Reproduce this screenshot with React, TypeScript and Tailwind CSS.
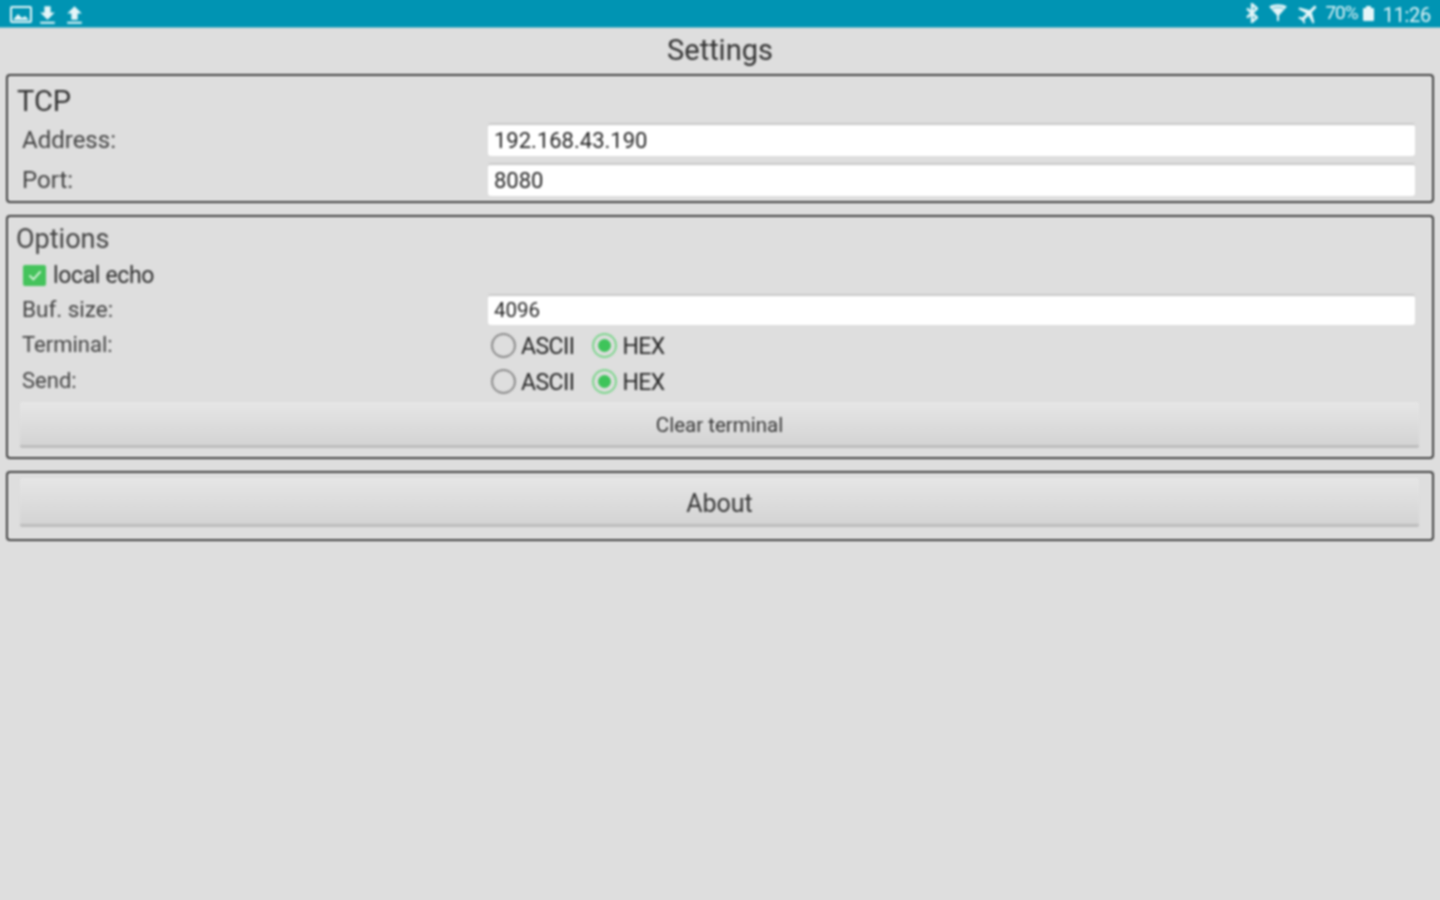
import React from "react";
import { MdFileDownload, MdFileUpload, MdLocalAirport } from "react-icons/md";

const TextField = ({ value, size = "h-[33px]", text = "text-[22px]" }: { value: string; size?: string; text?: string }) => (
  <div className={`${size} ${text} flex-1 bg-white rounded-[3px] border-t-2 border-[#c9c9c9] flex items-center pl-[6px] text-[#262626] leading-none`}>
    {value}
  </div>
);

const Radio = ({ label, checked }: { label: string; checked?: boolean }) => (
  <div className="flex items-center">
    <span
      className={`w-[25px] h-[25px] rounded-full border-2 flex items-center justify-center ${
        checked ? "border-[#7fd68f]" : "border-[#8e8e8e]"
      }`}
    >
      {checked && <span className="w-[13px] h-[13px] rounded-full bg-[#3ec45a]" />}
    </span>
    <span className="ml-[5px] mt-[2px] text-[23px] tracking-[-0.55px] text-[#262626] leading-none">{label}</span>
  </div>
);

const RadioRow = ({ label }: { label: string }) => (
  <div className="h-[36px] flex items-center">
    <div className="w-[466px] text-[22px] text-[#444] leading-none">{label}</div>
    <div className="flex gap-[18px] pl-[3px]">
      <Radio label="ASCII" />
      <Radio label="HEX" checked />
    </div>
  </div>
);

const GrayButton = ({ label, className }: { label: string; className: string }) => (
  <div
    className={`${className} flex items-center justify-center bg-gradient-to-b from-[#e6e6e6] to-[#d4d4d4] border-b-[3px] border-[#bdbdbd] rounded-[2px] text-[#383838] leading-none`}
  >
    {label}
  </div>
);

const Panel = ({ className, children }: { className: string; children: React.ReactNode }) => (
  <section className={`${className} mx-[6px] border-2 border-[#3c3c3c] rounded-[4px] shadow-[inset_0_0_0_1px_#eeeeee]`}>
    {children}
  </section>
);

export default function App() {
  return (
    <div className="w-[1440px] h-[900px] overflow-hidden bg-[#dedede] font-['Roboto',sans-serif]">
      {/* blur layer runs past the window so its edges don't fade */}
      <div className="w-[1448px] h-[908px] -ml-[4px] -mt-[4px] blur-[0.8px]">
        {/* Status bar */}
        <header className="h-[32px] pt-[4px] bg-[#0094b3] border-b border-[#6fb9cb] flex items-center justify-between pl-[12px] pr-[13px] text-[#e4f5f8]">
          <div className="flex items-center mt-[3px]">
            <svg viewBox="0 0 22 17" className="w-[22px] h-[17px] ml-[2px] mr-[3px] -mt-[1px]" fill="none" stroke="currentColor" strokeWidth="2">
              <rect x="1" y="1" width="20" height="15" rx="1" />
              <path d="M3 14l5-6 4 4 3-2 4 4z" fill="currentColor" strokeWidth="0" />
            </svg>
            <MdFileDownload className="w-[25px] h-[25px]" />
            <MdFileUpload className="w-[25px] h-[25px] ml-[2px]" />
          </div>
          <div className="flex items-center mt-[2px]">
            <svg viewBox="0 0 12 20" className="w-[12px] h-[20px] -mt-[3px]" fill="none" stroke="currentColor" strokeWidth="2.4">
              <path d="M1 5.5l10 9-5 4.5V1l5 4.5-10 9" />
            </svg>
            <svg viewBox="0 0 18 18" className="w-[18px] h-[18px] ml-[11px] -mt-[6px]" fill="currentColor">
              <path d="M0 3.5C5 .5 13 .5 18 3.5L10 12.5V18H8V12.5Z" />
              <path d="M3.5 5.5C7 4 11 4 14.5 5.5" stroke="#5cb8cc" strokeWidth="1" fill="none" />
            </svg>
            <MdLocalAirport className="w-[25px] h-[25px] ml-[9px] -mt-[2px] rotate-45" />
            <span className="ml-[4px] -mt-[3px] text-[19px] tracking-[-1px]">70%</span>
            <span className="relative ml-[5px] w-[11px] h-[13px] bg-[#e4f5f8] rounded-[1px]">
              <span className="absolute -top-[2px] left-[3px] w-[5px] h-[2px] bg-[#e4f5f8]" />
            </span>
            <span className="ml-[9px] mt-[1px] text-[20px] tracking-[-0.3px] leading-none">11:26</span>
          </div>
        </header>

        <div className="mx-[4px]">
          <h1 className="h-[46px] pb-[2px] flex items-center justify-center text-[29px] text-[#333] leading-none">Settings</h1>

          {/* TCP */}
          <Panel className="h-[129px] pl-[14px] pr-[17px]">
            <div className="h-[47px] pt-[10px] -ml-[5px] text-[29px] text-[#333] leading-[30px]">TCP</div>
            <div className="flex items-center">
              <div className="w-[466px] text-[24px] text-[#444] leading-none">Address:</div>
              <TextField value="192.168.43.190" />
            </div>
            <div className="flex items-center mt-[7px]">
              <div className="w-[466px] text-[24px] text-[#444] leading-none">Port:</div>
              <TextField value="8080" />
            </div>
          </Panel>

          {/* Options */}
          <Panel className="h-[244px] mt-[12px] pl-[14px] pr-[17px]">
            <div className="h-[46px] pt-[6px] -ml-[6px] text-[27px] text-[#444] leading-[32px]">Options</div>
            <div className="h-[26px] flex items-center -mt-[1px]">
              <span className="ml-[1px] w-[23px] h-[21px] rounded-[2px] bg-[#45c35c] flex items-center justify-center">
                <svg viewBox="0 0 20 20" className="w-[16px] h-[16px]" fill="none" stroke="#d6f3da" strokeWidth="2.4">
                  <path d="M3 10.5l5 5 9-10" />
                </svg>
              </span>
              <span className="ml-[7px] text-[23px] tracking-[-0.35px] text-[#303030] leading-none">local echo</span>
            </div>
            <div className="flex items-center mt-[6px]">
              <div className="w-[466px] text-[22.5px] text-[#444] leading-none">Buf. size:</div>
              <TextField value="4096" size="h-[31px]" text="text-[20.5px]" />
            </div>
            <div className="mt-[2px]">
              <RadioRow label="Terminal:" />
              <RadioRow label="Send:" />
            </div>
            <GrayButton label="Clear terminal" className="h-[46px] -ml-[2px] -mr-[4px] mt-[3px] pt-[3px] text-[20.5px]" />
          </Panel>

          {/* About */}
          <Panel className="h-[70px] mt-[12px] pt-[5px] pl-[12px] pr-[13px]">
            <GrayButton label="About" className="h-[49px] pt-[5px] text-[25px]" />
          </Panel>
        </div>
      </div>
    </div>
  );
}
